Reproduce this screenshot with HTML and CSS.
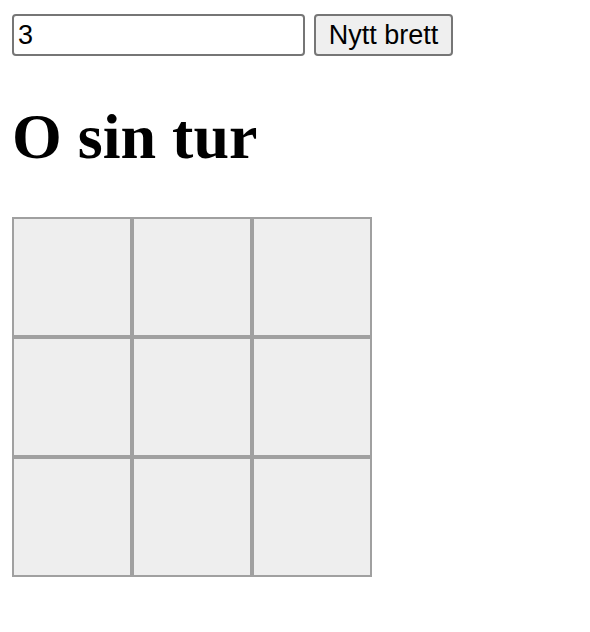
FILE: index.html
```html
<!DOCTYPE html>
<html>
<head>
<meta charset="utf-8">
<link rel="stylesheet" href="styles.css">
</head>
<body>
<div class="page">
  <div class="controls">
    <input class="size-input" type="text" value="3">
    <button class="new-board">Nytt brett</button>
  </div>
  <h1 class="status">O sin tur</h1>
  <div class="board">
    <div class="cell"></div><div class="cell"></div><div class="cell"></div>
    <div class="cell"></div><div class="cell"></div><div class="cell"></div>
    <div class="cell"></div><div class="cell"></div><div class="cell"></div>
  </div>
</div>
</body>
</html>
```
FILE: styles.css
```css
html, body {
  margin: 0;
  padding: 0;
  background: #ffffff;
}
.page {
  padding: 14px 12px 0 12px;
}
.controls {
  display: flex;
  gap: 9px;
  height: 42px;
}
.size-input {
  box-sizing: border-box;
  width: 293px;
  height: 42px;
  margin: 0;
  border: 2px solid #767676;
  border-radius: 4px;
  padding: 0 4px;
  font-family: "Liberation Sans", Arial, sans-serif;
  font-size: 27px;
  color: #000;
  background: #fff;
  outline: none;
}
.new-board {
  box-sizing: border-box;
  width: 139px;
  height: 42px;
  margin: 0;
  border: 2px solid #767676;
  border-radius: 4px;
  padding: 0;
  background: #efefef;
  font-family: "Liberation Sans", Arial, sans-serif;
  font-size: 27px;
  color: #000;
}
.status {
  font-family: "Liberation Serif", "Times New Roman", serif;
  font-weight: bold;
  font-size: 64px;
  line-height: 74px;
  margin: 44px 0 43px 0;
}
.board {
  display: grid;
  grid-template-columns: repeat(3, 120px);
  grid-auto-rows: 120px;
  width: 360px;
}
.cell {
  box-sizing: border-box;
  background: #eeeeee;
  border: 2px solid #a0a0a0;
}
```
